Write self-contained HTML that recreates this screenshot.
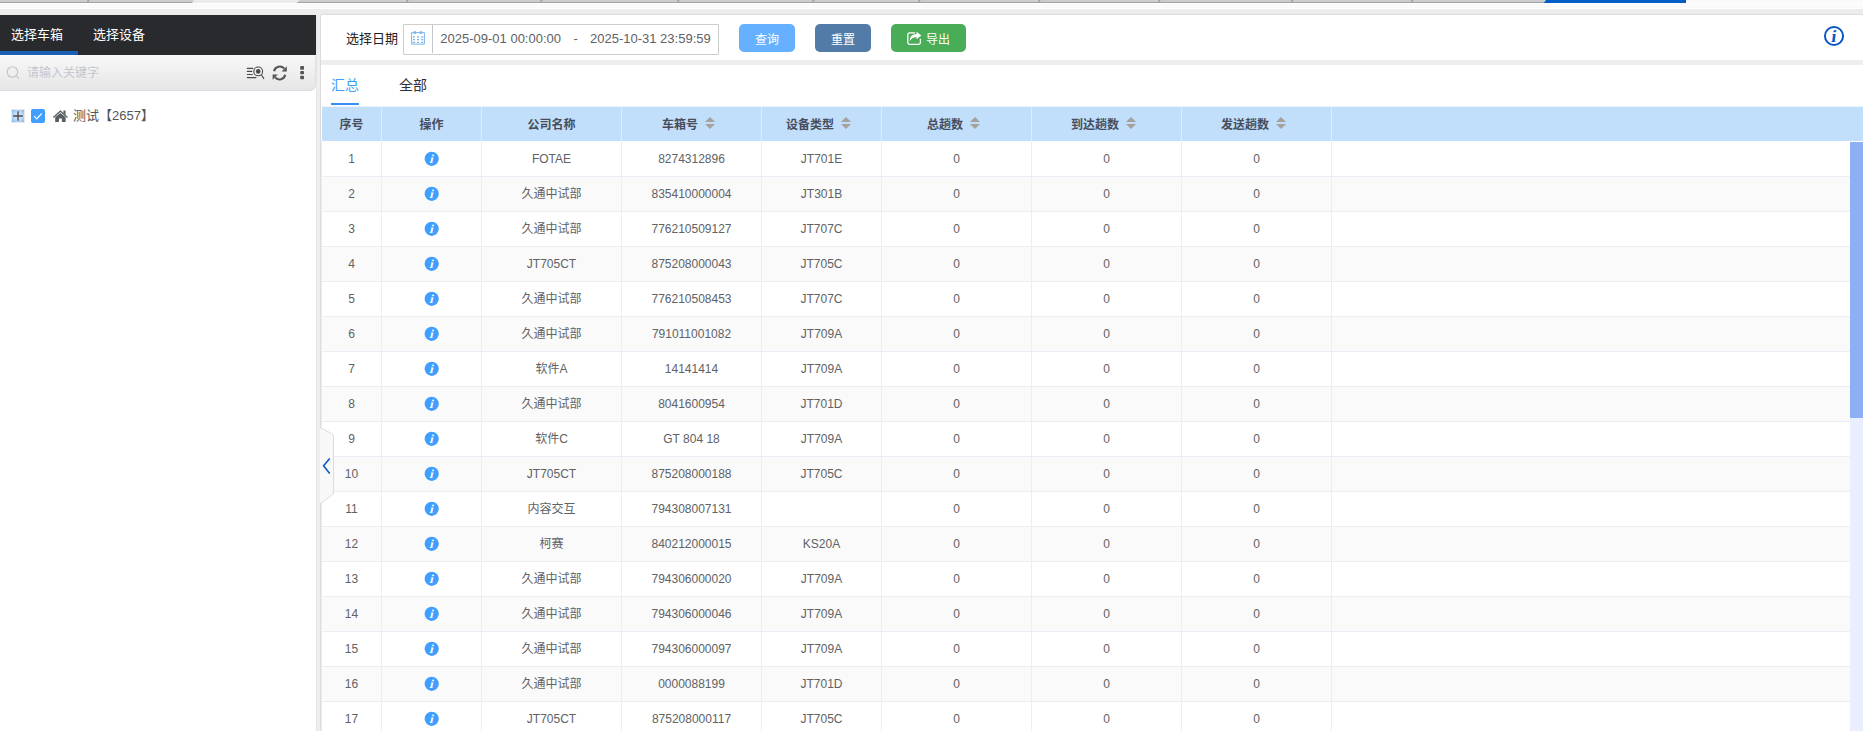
<!DOCTYPE html>
<html lang="zh-CN">
<head>
<meta charset="utf-8">
<title>报表</title>
<style>
*{box-sizing:border-box;margin:0;padding:0}
html,body{width:1863px;height:731px;overflow:hidden;background:#fff}
body{position:relative;font-family:"Liberation Sans","Noto Sans CJK SC",sans-serif;font-size:12px;color:#606266}
.abs{position:absolute}
/* top strip */
#top1{left:0;top:0;width:1863px;height:9px;background:#fafafa;border-bottom:1px solid #fff}
#top0{left:0;top:3px;width:1863px;height:1px;background:#fff}
#top2{left:0;top:9px;width:1863px;height:6px;background:#ececec}
#top3{left:321px;top:14px;width:1542px;height:1px;background:#dcdcdc}
.ttab{position:absolute;top:0;height:3px;background:#cccdce;border-bottom:1px solid #a2a2a2}
.tsep{position:absolute;top:0;width:1.5px;height:3px;background:#a6a6a6;transform:skewX(-20deg)}
/* left panel */
#lhead{left:0;top:15px;width:316px;height:40px;background:#292a2e}
#lhead .t{position:absolute;top:1px;height:36px;line-height:37px;font-size:13px;color:#fff}
#lhead .bar{position:absolute;left:0;top:36px;width:78px;height:4px;background:#1a5fb4}
#lsearch{left:0;top:55px;width:316px;height:36px;background:linear-gradient(#f8f8f8,#e6e6e6);border-bottom:1px solid #d8dde6;border-right:1px solid #dde0e7;border-radius:0 3px 6px 0}
#lsearch .ph{position:absolute;left:27px;top:1px;line-height:35px;font-size:12px;color:#c3c6cd}
#divider{left:316px;top:15px;width:5px;height:716px;background:#eeeeee;border-right:1px solid #dcdcdc;border-left:1px solid #e6e6e6}
/* right */
#toolbar{left:321px;top:15px;width:1543px;height:45px;background:#fff}
#gap{left:321px;top:60px;width:1543px;height:5px;background:#eeeeee}
.lbl{left:346px;top:31px;font-size:13px;color:#222;line-height:16px}
#date{left:403px;top:24px;width:316px;height:31px;border:1px solid #cdcdcd;border-radius:1px;background:#fff}
#date .ic{position:absolute;left:0;top:0;width:29px;height:28px;border-right:1px solid #c4c7ce}
#date .v{position:absolute;top:-1px;line-height:29px;font-size:13px;color:#606266}
.btn{height:28px;border-radius:5px;color:#fff;font-size:12px;line-height:32px;text-align:center}
/* tabs */
.tab{font-size:14px;line-height:20px}
/* table */
#thead{left:322px;top:107px;width:1541px;height:34px;background:#c1defa}
.th{position:absolute;top:0;height:34px;line-height:36px;text-align:center;font-weight:bold;color:#474d5c;font-size:12px;border-right:1px solid #e6eaf2}
#tbody{left:321px;top:141px;width:1529px;height:600px;overflow:hidden;border-left:1px solid #ebeef5;padding-top:1px;background:#fff}
.tr{position:relative;height:35px;border-bottom:1px solid #ebeef5;background:#fff}
.tr.alt{background:#fafafa}
.td{position:absolute;top:0;height:34px;line-height:34px;text-align:center;border-right:1px solid #ebeef5;color:#606266}
.c1{left:0;width:60px}.c2{left:60px;width:100px}.c3{left:160px;width:140px}.c4{left:300px;width:140px}.c5{left:440px;width:120px}.c6{left:560px;width:150px}.c7{left:710px;width:150px}.c8{left:860px;width:150px}.c9{left:1010px;width:518px;border-right:none}
.ii{position:absolute;left:42px;top:9px}
.sort{display:inline-block;position:relative;width:10px;height:14px;vertical-align:middle;margin-left:7px;margin-right:6px;top:-2.5px}
.sort i{position:absolute;left:0;width:0;height:0;border:5px solid transparent}
.sort .up{top:-4px;border-bottom-color:#a5a19d}
.sort .dn{top:8px;border-top-color:#a5a19d}
#sbtrack{left:1850px;top:142px;width:13px;height:589px;background:#e9effe}
#sbthumb{left:1850px;top:142px;width:13px;height:276px;background:#8eaef6}
</style>
</head>
<body>
<div class="abs" id="top1"></div>
<div class="abs" id="top0"></div>
<div class="abs" id="top2"></div>
<div class="abs" id="top3"></div>
<div class="abs" style="left:193px;top:0;width:106px;height:3px;background:#ebebeb"></div>
<div class="ttab" style="left:0;width:194px;clip-path:polygon(0 0,100% 0,calc(100% - 2px) 100%,0 100%)"></div>
<div class="ttab" style="left:297px;width:1249px;clip-path:polygon(2.5px 0,100% 0,100% 100%,0 100%)"></div>
<div class="ttab" style="left:1544px;width:142px;background:#005fc6;border-bottom-color:#005fc6;clip-path:polygon(2px 0,100% 0,100% 100%,0 100%)"></div>
<div class="tsep" style="left:87px"></div><div class="tsep" style="left:406px"></div><div class="tsep" style="left:540px"></div><div class="tsep" style="left:677px"></div><div class="tsep" style="left:812px"></div><div class="tsep" style="left:918px"></div><div class="tsep" style="left:1038px"></div><div class="tsep" style="left:1158px"></div><div class="tsep" style="left:1291px"></div><div class="tsep" style="left:1411px"></div>

<div class="abs" id="lhead"><span class="t" style="left:11px">选择车箱</span><span class="t" style="left:93px">选择设备</span><div class="bar"></div></div>
<div class="abs" id="lsearch"><span class="ph">请输入关键字</span></div>
<svg class="abs" style="left:0;top:55px" width="316" height="36" viewBox="0 0 316 36">
<g fill="none" stroke="#c0c4cc" stroke-width="1.1"><circle cx="12.4" cy="17" r="5.3"/><path d="M16.3 20.9 L19.2 23.8"/></g>
<g fill="none" stroke="#4a4a4a" stroke-width="1.1" stroke-linecap="round"><path d="M247.3 13.4H252.8M247.3 16.4H251.8M247.3 19.5H252.3M247.3 22.6H256"/><circle cx="258.2" cy="16.4" r="4.4"/><path d="M261.4 19.8 L263.8 23.6"/></g>
<circle cx="258.2" cy="16.4" r="2.3" fill="#4a4a4a"/>
<g fill="none" stroke="#555" stroke-width="2.1"><path d="M274.1 16.2 A5.8 5.8 0 0 1 284.2 13.6"/><path d="M285.2 19.8 A5.8 5.8 0 0 1 275.1 22.4"/></g>
<path d="M286.8 11.2 V16.4 H281.6 Z" fill="#555"/><path d="M272.6 24.8 V19.6 H277.8 Z" fill="#555"/>
<g fill="#555"><rect x="300.2" y="11" width="3.8" height="3.8" rx="0.8"/><rect x="300.2" y="16.1" width="3.8" height="3.2" rx="0.8"/><rect x="300.2" y="20.8" width="3.8" height="3.4" rx="0.8"/></g>
</svg>
<svg class="abs" style="left:0;top:105px" width="72" height="22" viewBox="0 0 72 22">
<defs><radialGradient id="pg" cx="50%" cy="50%" r="75%"><stop offset="0" stop-color="#e2effc"/><stop offset="0.55" stop-color="#b2d4f6"/><stop offset="1" stop-color="#5aa3ea"/></radialGradient></defs>
<rect x="11.5" y="4.5" width="13" height="13" fill="url(#pg)" stroke="#eee9e4" stroke-width="1"/>
<path d="M13.2 11H22.8M18 6.2V15.8" stroke="#4a4a4a" stroke-width="1.35" fill="none"/>
<rect x="31" y="4" width="14" height="14" rx="2" fill="#409eff"/>
<path d="M34.2 11.2 L36.7 13.8 L41.8 8.4" fill="none" stroke="#fff" stroke-width="1.2"/>
<path d="M60.4 5.2 L67.9 12 L67 13 L60.4 7.1 L53.8 13 L52.9 12 Z M63.4 5.5 H65.6 V9.7 L63.4 7.7 Z M55.2 12.3 L60.4 7.9 L65.6 12.3 V17 H61.9 V13.4 H58.9 V17 H55.2 Z" fill="#585c63"/>
</svg>
<div class="abs" id="tree" style="left:73px;top:108px;font-size:13px;color:#555;line-height:16px">测试【2657】</div>
<div class="abs" id="divider"></div>

<div class="abs" id="toolbar"></div>
<div class="abs" id="gap"></div>
<div class="abs lbl">选择日期</div>
<div class="abs" id="date"><div class="ic"><svg style="position:absolute;left:7px;top:6px" width="14" height="14" viewBox="0 0 14 14"><path d="M0.6 1.6 H13.4 V13.1 H0.6 Z" fill="none" stroke="#7ab4ec" stroke-width="1"/><g fill="#7ab4ec"><circle cx="3.9" cy="1.5" r="1.5"/><circle cx="9.9" cy="1.5" r="1.5"/><rect x="1.9" y="5.25" width="2" height="1.3"/><rect x="6.0" y="5.25" width="2" height="1.3"/><rect x="10.2" y="5.25" width="2" height="1.3"/><rect x="1.9" y="7.95" width="2" height="1.3"/><rect x="6.0" y="7.95" width="2" height="1.3"/><rect x="10.2" y="7.95" width="2" height="1.3"/><rect x="1.9" y="10.75" width="2" height="1.3"/><rect x="6.0" y="10.75" width="2" height="1.3"/><rect x="10.2" y="10.75" width="2" height="1.3"/></g></svg></div><span class="v" style="left:36.3px">2025-09-01 00:00:00</span><span class="v" style="left:169.5px">-</span><span class="v" style="left:186px">2025-10-31 23:59:59</span></div>
<div class="abs btn" style="left:739px;top:24px;width:56px;background:#66b1ff">查询</div>
<div class="abs btn" style="left:815px;top:24px;width:56px;background:#537ba8">重置</div>
<div class="abs btn" style="left:891px;top:24px;width:75px;background:#49ac57;padding-left:19px">导出</div>
<svg class="abs" style="left:905px;top:30px" width="18" height="16" viewBox="0 0 18 16"><path d="M10 2.9 H4.6 Q2.8 2.9 2.8 4.7 V12.5 Q2.8 14.3 4.6 14.3 H13.6 Q15.4 14.3 15.4 12.5 V8.8" fill="none" stroke="#fff" stroke-width="1.3"/><path d="M11.5 1.7 L16.3 5.6 L11.5 9.3 V7.3 Q7.2 7 4.5 11.2 Q4.6 4.3 11.5 3.9 Z" fill="#fff"/></svg>

<div class="abs tab" style="left:331px;top:75px;color:#409eff">汇总</div>
<div class="abs" style="left:331px;top:103px;width:28px;height:2px;background:#3490f5"></div>
<div class="abs tab" style="left:399px;top:75px;color:#303133">全部</div>

<svg class="abs" style="left:1823px;top:25px" width="22" height="22" viewBox="0 0 22 22"><circle cx="11" cy="11" r="9.05" fill="none" stroke="#0a56c2" stroke-width="2"/><text transform="translate(10.25,16.6) skewX(-8)" text-anchor="middle" font-family="Liberation Serif, serif" font-weight="bold" font-size="17.5" fill="#0a56c2">i</text></svg>
<div class="abs" style="left:322px;top:106px;width:1541px;height:1px;background:#eaf2fc"></div>
<div class="abs" id="thead">
<div class="th c1">序号</div><div class="th c2">操作</div><div class="th c3">公司名称</div><div class="th c4">车箱号<span class="sort"><i class="up"></i><i class="dn"></i></span></div><div class="th c5">设备类型<span class="sort"><i class="up"></i><i class="dn"></i></span></div><div class="th c6">总趟数<span class="sort"><i class="up"></i><i class="dn"></i></span></div><div class="th c7">到达趟数<span class="sort"><i class="up"></i><i class="dn"></i></span></div><div class="th c8">发送趟数<span class="sort"><i class="up"></i><i class="dn"></i></span></div>
</div>
<div class="abs" id="tbody">
<div class="tr"><div class="td c1">1</div><div class="td c2"><svg class="ii" viewBox="0 0 16 16" width="16" height="16"><circle cx="7.7" cy="7.8" r="7.1" fill="#409eff"/><text transform="translate(6.95,11.8) skewX(-14)" text-anchor="middle" font-family="Liberation Serif, serif" font-weight="bold" font-size="12.2" fill="#fff">i</text></svg></div><div class="td c3">FOTAE</div><div class="td c4">8274312896</div><div class="td c5">JT701E</div><div class="td c6">0</div><div class="td c7">0</div><div class="td c8">0</div><div class="td c9"></div></div>
<div class="tr alt"><div class="td c1">2</div><div class="td c2"><svg class="ii" viewBox="0 0 16 16" width="16" height="16"><circle cx="7.7" cy="7.8" r="7.1" fill="#409eff"/><text transform="translate(6.95,11.8) skewX(-14)" text-anchor="middle" font-family="Liberation Serif, serif" font-weight="bold" font-size="12.2" fill="#fff">i</text></svg></div><div class="td c3">久通中试部</div><div class="td c4">835410000004</div><div class="td c5">JT301B</div><div class="td c6">0</div><div class="td c7">0</div><div class="td c8">0</div><div class="td c9"></div></div>
<div class="tr"><div class="td c1">3</div><div class="td c2"><svg class="ii" viewBox="0 0 16 16" width="16" height="16"><circle cx="7.7" cy="7.8" r="7.1" fill="#409eff"/><text transform="translate(6.95,11.8) skewX(-14)" text-anchor="middle" font-family="Liberation Serif, serif" font-weight="bold" font-size="12.2" fill="#fff">i</text></svg></div><div class="td c3">久通中试部</div><div class="td c4">776210509127</div><div class="td c5">JT707C</div><div class="td c6">0</div><div class="td c7">0</div><div class="td c8">0</div><div class="td c9"></div></div>
<div class="tr alt"><div class="td c1">4</div><div class="td c2"><svg class="ii" viewBox="0 0 16 16" width="16" height="16"><circle cx="7.7" cy="7.8" r="7.1" fill="#409eff"/><text transform="translate(6.95,11.8) skewX(-14)" text-anchor="middle" font-family="Liberation Serif, serif" font-weight="bold" font-size="12.2" fill="#fff">i</text></svg></div><div class="td c3">JT705CT</div><div class="td c4">875208000043</div><div class="td c5">JT705C</div><div class="td c6">0</div><div class="td c7">0</div><div class="td c8">0</div><div class="td c9"></div></div>
<div class="tr"><div class="td c1">5</div><div class="td c2"><svg class="ii" viewBox="0 0 16 16" width="16" height="16"><circle cx="7.7" cy="7.8" r="7.1" fill="#409eff"/><text transform="translate(6.95,11.8) skewX(-14)" text-anchor="middle" font-family="Liberation Serif, serif" font-weight="bold" font-size="12.2" fill="#fff">i</text></svg></div><div class="td c3">久通中试部</div><div class="td c4">776210508453</div><div class="td c5">JT707C</div><div class="td c6">0</div><div class="td c7">0</div><div class="td c8">0</div><div class="td c9"></div></div>
<div class="tr alt"><div class="td c1">6</div><div class="td c2"><svg class="ii" viewBox="0 0 16 16" width="16" height="16"><circle cx="7.7" cy="7.8" r="7.1" fill="#409eff"/><text transform="translate(6.95,11.8) skewX(-14)" text-anchor="middle" font-family="Liberation Serif, serif" font-weight="bold" font-size="12.2" fill="#fff">i</text></svg></div><div class="td c3">久通中试部</div><div class="td c4">791011001082</div><div class="td c5">JT709A</div><div class="td c6">0</div><div class="td c7">0</div><div class="td c8">0</div><div class="td c9"></div></div>
<div class="tr"><div class="td c1">7</div><div class="td c2"><svg class="ii" viewBox="0 0 16 16" width="16" height="16"><circle cx="7.7" cy="7.8" r="7.1" fill="#409eff"/><text transform="translate(6.95,11.8) skewX(-14)" text-anchor="middle" font-family="Liberation Serif, serif" font-weight="bold" font-size="12.2" fill="#fff">i</text></svg></div><div class="td c3">软件A</div><div class="td c4">14141414</div><div class="td c5">JT709A</div><div class="td c6">0</div><div class="td c7">0</div><div class="td c8">0</div><div class="td c9"></div></div>
<div class="tr alt"><div class="td c1">8</div><div class="td c2"><svg class="ii" viewBox="0 0 16 16" width="16" height="16"><circle cx="7.7" cy="7.8" r="7.1" fill="#409eff"/><text transform="translate(6.95,11.8) skewX(-14)" text-anchor="middle" font-family="Liberation Serif, serif" font-weight="bold" font-size="12.2" fill="#fff">i</text></svg></div><div class="td c3">久通中试部</div><div class="td c4">8041600954</div><div class="td c5">JT701D</div><div class="td c6">0</div><div class="td c7">0</div><div class="td c8">0</div><div class="td c9"></div></div>
<div class="tr"><div class="td c1">9</div><div class="td c2"><svg class="ii" viewBox="0 0 16 16" width="16" height="16"><circle cx="7.7" cy="7.8" r="7.1" fill="#409eff"/><text transform="translate(6.95,11.8) skewX(-14)" text-anchor="middle" font-family="Liberation Serif, serif" font-weight="bold" font-size="12.2" fill="#fff">i</text></svg></div><div class="td c3">软件C</div><div class="td c4">GT 804 18</div><div class="td c5">JT709A</div><div class="td c6">0</div><div class="td c7">0</div><div class="td c8">0</div><div class="td c9"></div></div>
<div class="tr alt"><div class="td c1">10</div><div class="td c2"><svg class="ii" viewBox="0 0 16 16" width="16" height="16"><circle cx="7.7" cy="7.8" r="7.1" fill="#409eff"/><text transform="translate(6.95,11.8) skewX(-14)" text-anchor="middle" font-family="Liberation Serif, serif" font-weight="bold" font-size="12.2" fill="#fff">i</text></svg></div><div class="td c3">JT705CT</div><div class="td c4">875208000188</div><div class="td c5">JT705C</div><div class="td c6">0</div><div class="td c7">0</div><div class="td c8">0</div><div class="td c9"></div></div>
<div class="tr"><div class="td c1">11</div><div class="td c2"><svg class="ii" viewBox="0 0 16 16" width="16" height="16"><circle cx="7.7" cy="7.8" r="7.1" fill="#409eff"/><text transform="translate(6.95,11.8) skewX(-14)" text-anchor="middle" font-family="Liberation Serif, serif" font-weight="bold" font-size="12.2" fill="#fff">i</text></svg></div><div class="td c3">内容交互</div><div class="td c4">794308007131</div><div class="td c5"></div><div class="td c6">0</div><div class="td c7">0</div><div class="td c8">0</div><div class="td c9"></div></div>
<div class="tr alt"><div class="td c1">12</div><div class="td c2"><svg class="ii" viewBox="0 0 16 16" width="16" height="16"><circle cx="7.7" cy="7.8" r="7.1" fill="#409eff"/><text transform="translate(6.95,11.8) skewX(-14)" text-anchor="middle" font-family="Liberation Serif, serif" font-weight="bold" font-size="12.2" fill="#fff">i</text></svg></div><div class="td c3">柯赛</div><div class="td c4">840212000015</div><div class="td c5">KS20A</div><div class="td c6">0</div><div class="td c7">0</div><div class="td c8">0</div><div class="td c9"></div></div>
<div class="tr"><div class="td c1">13</div><div class="td c2"><svg class="ii" viewBox="0 0 16 16" width="16" height="16"><circle cx="7.7" cy="7.8" r="7.1" fill="#409eff"/><text transform="translate(6.95,11.8) skewX(-14)" text-anchor="middle" font-family="Liberation Serif, serif" font-weight="bold" font-size="12.2" fill="#fff">i</text></svg></div><div class="td c3">久通中试部</div><div class="td c4">794306000020</div><div class="td c5">JT709A</div><div class="td c6">0</div><div class="td c7">0</div><div class="td c8">0</div><div class="td c9"></div></div>
<div class="tr alt"><div class="td c1">14</div><div class="td c2"><svg class="ii" viewBox="0 0 16 16" width="16" height="16"><circle cx="7.7" cy="7.8" r="7.1" fill="#409eff"/><text transform="translate(6.95,11.8) skewX(-14)" text-anchor="middle" font-family="Liberation Serif, serif" font-weight="bold" font-size="12.2" fill="#fff">i</text></svg></div><div class="td c3">久通中试部</div><div class="td c4">794306000046</div><div class="td c5">JT709A</div><div class="td c6">0</div><div class="td c7">0</div><div class="td c8">0</div><div class="td c9"></div></div>
<div class="tr"><div class="td c1">15</div><div class="td c2"><svg class="ii" viewBox="0 0 16 16" width="16" height="16"><circle cx="7.7" cy="7.8" r="7.1" fill="#409eff"/><text transform="translate(6.95,11.8) skewX(-14)" text-anchor="middle" font-family="Liberation Serif, serif" font-weight="bold" font-size="12.2" fill="#fff">i</text></svg></div><div class="td c3">久通中试部</div><div class="td c4">794306000097</div><div class="td c5">JT709A</div><div class="td c6">0</div><div class="td c7">0</div><div class="td c8">0</div><div class="td c9"></div></div>
<div class="tr alt"><div class="td c1">16</div><div class="td c2"><svg class="ii" viewBox="0 0 16 16" width="16" height="16"><circle cx="7.7" cy="7.8" r="7.1" fill="#409eff"/><text transform="translate(6.95,11.8) skewX(-14)" text-anchor="middle" font-family="Liberation Serif, serif" font-weight="bold" font-size="12.2" fill="#fff">i</text></svg></div><div class="td c3">久通中试部</div><div class="td c4">0000088199</div><div class="td c5">JT701D</div><div class="td c6">0</div><div class="td c7">0</div><div class="td c8">0</div><div class="td c9"></div></div>
<div class="tr"><div class="td c1">17</div><div class="td c2"><svg class="ii" viewBox="0 0 16 16" width="16" height="16"><circle cx="7.7" cy="7.8" r="7.1" fill="#409eff"/><text transform="translate(6.95,11.8) skewX(-14)" text-anchor="middle" font-family="Liberation Serif, serif" font-weight="bold" font-size="12.2" fill="#fff">i</text></svg></div><div class="td c3">JT705CT</div><div class="td c4">875208000117</div><div class="td c5">JT705C</div><div class="td c6">0</div><div class="td c7">0</div><div class="td c8">0</div><div class="td c9"></div></div>
</div>
<svg class="abs" style="left:319px;top:426px" width="16" height="80" viewBox="0 0 16 80"><path d="M1 1.5 L12.5 7.5 Q14.5 8.6 14.5 11 V66 Q14.5 68.4 12.5 69.5 L1 78" fill="#f8f8f8" stroke="#dcdcdc" stroke-width="1"/><path d="M10.7 32.4 L4.6 39.8 L10.7 47.4" fill="none" stroke="#0a5bc4" stroke-width="1.6"/></svg>
<div class="abs" id="sbtrack"></div>
<div class="abs" id="sbthumb"></div>
</body>
</html>
